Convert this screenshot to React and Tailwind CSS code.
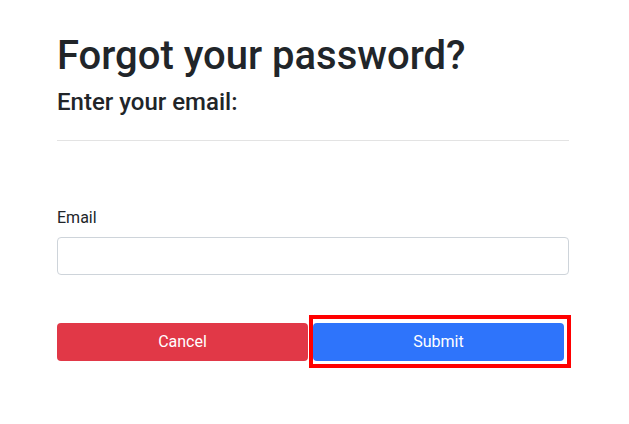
import React from "react";

export default function App() {
  return (
    <div className="min-h-[424px] w-[629px] bg-white font-['Roboto',sans-serif] text-[#212529]">
      <div className="ml-[57px] w-[512px] pt-[32px]">
        <h1 className="text-[40px] leading-[48px] font-medium">Forgot your password?</h1>
        <h4 className="mt-[8px] text-[24px] leading-[28px] font-medium">Enter your email:</h4>
        <hr className="mt-[24px] border-0 border-t border-[#e3e3e3]" />

        <form className="mt-[67px]" onSubmit={(e) => e.preventDefault()}>
          <label htmlFor="email" className="block text-base leading-[20px]">
            Email
          </label>
          <input
            id="email"
            type="email"
            className="mt-[9px] block h-[38px] w-full rounded-[4px] border border-[#ced4da] bg-white px-3 text-base outline-none"
          />

          <div className="mt-[48px] flex gap-[5px] pr-[5px]">
            <button
              type="button"
              className="h-[38px] flex-1 rounded-[4px] bg-[#e13847] text-base text-white"
            >
              Cancel
            </button>
            <div className="relative flex-1">
              <button
                type="submit"
                className="h-[38px] w-full rounded-[4px] bg-[#2e74fb] text-base text-white"
              >
                Submit
              </button>
              <div className="pointer-events-none absolute -left-[4px] -top-[8px] -right-[7px] -bottom-[7px] border-4 border-[#ff0000]" />
            </div>
          </div>
        </form>
      </div>
    </div>
  );
}
